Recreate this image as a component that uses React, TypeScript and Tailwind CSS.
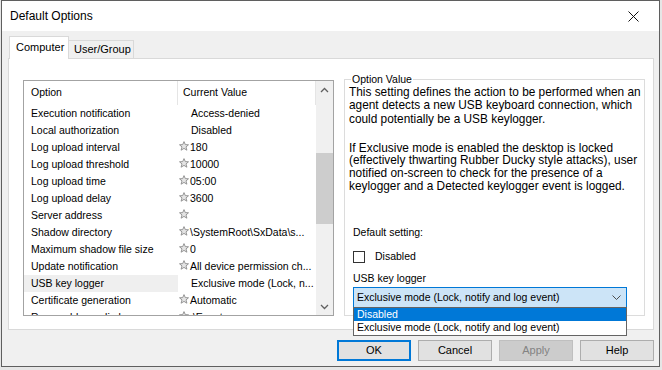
import React from 'react';

type Row = { option: string; value: string; star: boolean; selected?: boolean };

const rows: Row[] = [
  { option: 'Execution notification', value: 'Access-denied', star: false },
  { option: 'Local authorization', value: 'Disabled', star: false },
  { option: 'Log upload interval', value: '180', star: true },
  { option: 'Log upload threshold', value: '10000', star: true },
  { option: 'Log upload time', value: '05:00', star: true },
  { option: 'Log upload delay', value: '3600', star: true },
  { option: 'Server address', value: '', star: true },
  { option: 'Shadow directory', value: '\\SystemRoot\\SxData\\s...', star: true },
  { option: 'Maximum shadow file size', value: '0', star: true },
  { option: 'Update notification', value: 'All device permission ch...', star: true },
  { option: 'USB key logger', value: 'Exclusive mode (Lock, n...', star: false, selected: true },
  { option: 'Certificate generation', value: 'Automatic', star: true },
  { option: 'Removable media log', value: '.\\Events', star: true },
];

const Star: React.FC = () => (
  <svg width="10" height="10" viewBox="0 0 10 10" className="shrink-0 mt-[1px] mr-[1px]">
    <polygon
      points="5,0.6 6.3,3.6 9.5,3.8 7,5.9 7.9,9.2 5,7.4 2.1,9.2 3,5.9 0.5,3.8 3.7,3.6"
      fill="#e4e4e4"
      stroke="#8c8c8c"
      strokeWidth="0.9"
      strokeLinejoin="round"
    />
  </svg>
);

const Chevron: React.FC<{ up?: boolean }> = ({ up }) => (
  <svg width="9" height="6" viewBox="0 0 9 6">
    <polyline
      points={up ? '1,5 4.5,1.5 8,5' : '1,1 4.5,4.5 8,1'}
      fill="none"
      stroke="#606060"
      strokeWidth="1.3"
    />
  </svg>
);

const ListBox: React.FC = () => (
  <div className="w-[311px] h-[236px] border border-[#a3a3a3] flex overflow-hidden bg-white">
    <div className="flex-1 flex flex-col overflow-hidden">
      {/* Header */}
      <div className="h-[24px] shrink-0 flex">
        <div className="w-[154px] flex items-center pl-[7px] border-r border-[#e5e5e5]">Option</div>
        <div className="flex-1 flex items-center pl-[5px] border-r border-[#e5e5e5]">Current Value</div>
      </div>
      {rows.map((r) => (
        <div key={r.option} className="h-[17px] shrink-0 flex">
          <div
            className={`w-[154px] flex items-center pl-[7px] whitespace-nowrap ${
              r.selected ? 'bg-[#efefef]' : ''
            }`}
          >
            {r.option}
          </div>
          <div className="flex-1 flex items-start pt-[1px] pl-[1px] whitespace-nowrap overflow-hidden">
            {r.star ? <Star /> : <span className="w-[12px] shrink-0" />}
            <span className="leading-[14px]">{r.value}</span>
          </div>
        </div>
      ))}
    </div>
    {/* Scrollbar */}
    <div className="w-[17px] shrink-0 flex flex-col bg-[#f0f0f0]">
      <div className="h-[17px] flex items-center justify-center">
        <Chevron up />
      </div>
      <div className="h-[55px]" />
      <div className="h-[71px] bg-[#cdcdcd]" />
      <div className="flex-1" />
      <div className="h-[17px] flex items-center justify-center">
        <Chevron />
      </div>
    </div>
  </div>
);

const OptionValue: React.FC = () => (
  <fieldset className="w-[301px] h-[243px] mt-[-7px] ml-[10px] border border-[#dcdcdc] pl-[4px] pr-[2px]">
    <legend className="ml-[2px] px-[1px] leading-[13px]">Option Value</legend>
    <p className="text-[11.85px] leading-[13.3px] whitespace-nowrap">
      This setting defines the action to be performed when an
      <br />
      agent detects a new USB keyboard connection, which
      <br />
      could potentially be a USB keylogger.
    </p>
    <p className="mt-[16px] text-[11.85px] leading-[12.6px] whitespace-nowrap">
      If Exclusive mode is enabled the desktop is locked
      <br />
      (effectively thwarting Rubber Ducky style attacks), user
      <br />
      notified on-screen to check for the presence of a
      <br />
      keylogger and a Detected keylogger event is logged.
    </p>
    <div className="pl-[4px]">
      <div className="mt-[34px] leading-[13px]">Default setting:</div>
      <div className="mt-[11px] flex items-center h-[13px]">
        <span className="w-[12px] h-[12px] border border-[#333333] bg-white" />
        <span className="ml-[10px]">Disabled</span>
      </div>
      <div className="mt-[9px] leading-[13px]">USB key logger</div>
      <div className="relative mt-[2px] w-[274px]">
        <div className="h-[21px] border border-[#0078d7] bg-[#cce4f7] flex items-center pl-[3px] pr-[5px]">
          <span className="flex-1">Exclusive mode (Lock, notify and log event)</span>
          <svg width="9" height="5" viewBox="0 0 9 5">
            <polyline points="0.5,0.5 4.5,4.5 8.5,0.5" fill="none" stroke="#4d4d4d" strokeWidth="1" />
          </svg>
        </div>
        {/* open dropdown list */}
        <div className="absolute left-0 top-[20px] w-[274px] border border-[#646464] bg-white z-20">
          <div className="h-[13px] bg-[#0078d7] text-white flex items-center pl-[3px]">Disabled</div>
          <div className="h-[14px] flex items-center pl-[3px]">Exclusive mode (Lock, notify and log event)</div>
        </div>
      </div>
    </div>
  </fieldset>
);

const Button: React.FC<{ label: string; variant?: 'default' | 'disabled' | 'normal' }> = ({
  label,
  variant = 'normal',
}) => (
  <div
    className={`w-[74px] h-[21px] flex items-center justify-center text-[11px] ${
      variant === 'default'
        ? 'border-2 border-[#0078d7] bg-[#e1e1e1] text-black'
        : variant === 'disabled'
        ? 'border border-[#bfbfbf] bg-[#cccccc] text-[#838383]'
        : 'border border-[#adadad] bg-[#e1e1e1] text-black'
    }`}
  >
    {label}
  </div>
);

export default function App() {
  return (
    <div className="w-[662px] h-[370px] bg-[#e6e6e6] font-['Liberation_Sans',Arial,sans-serif] text-[10.5px] text-black overflow-hidden">
      <div className="ml-[1px] w-[659px] h-[367px] border border-[#5f5f5f] bg-[#f0f0f0] flex flex-col">
        {/* Title bar */}
        <div className="h-[30px] bg-white flex items-center pl-[8px] pr-[20px] shrink-0">
          <span className="flex-1 text-[12px]">Default Options</span>
          <svg width="11" height="11" viewBox="0 0 11 11">
            <path d="M0.5 0.5 L10.5 10.5 M10.5 0.5 L0.5 10.5" stroke="#111" strokeWidth="1" />
          </svg>
        </div>

        {/* Body */}
        <div className="pl-[6px] pt-[5px] flex flex-col">
          {/* Tabs */}
          <div className="h-[22px] flex items-end pl-[1px] relative z-10 text-[11px]">
            <div className="h-[23px] mb-[-1px] w-[60px] bg-white border border-b-0 border-[#d9d9d9] flex items-center pl-[6px] pb-[1px]">
              Computer
            </div>
            <div className="h-[18px] w-[65px] bg-[#f0f0f0] border border-b-0 border-l-0 border-[#d9d9d9] flex items-center pl-[5px]">
              User/Group
            </div>
          </div>

          {/* Tab panel */}
          <div className="w-[646px] h-[272px] bg-white border border-[#d9d9d9] flex items-start pt-[21px] pl-[14px]">
            <ListBox />
            <OptionValue />
          </div>

          {/* Buttons */}
          <div className="w-[646px] mt-[10px] flex justify-end gap-[7px]">
            <Button label="OK" variant="default" />
            <Button label="Cancel" />
            <Button label="Apply" variant="disabled" />
            <Button label="Help" />
          </div>
        </div>
      </div>
    </div>
  );
}
